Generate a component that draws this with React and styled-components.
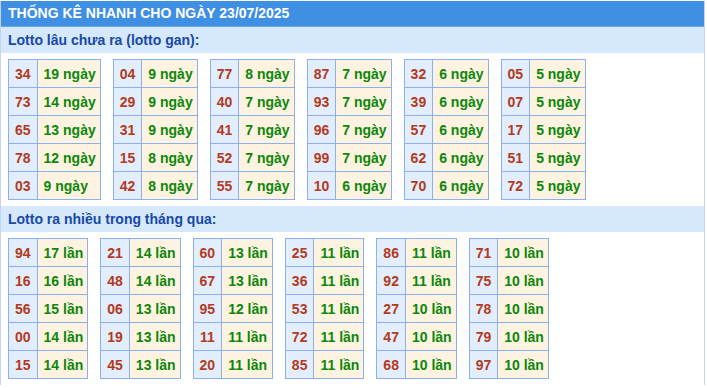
import React from "react";
import styled, { createGlobalStyle } from "styled-components";

const GlobalStyle = createGlobalStyle`
  body {
    margin: 0;
    background: #fff;
    font-family: "Liberation Sans", Arial, sans-serif;
  }
`;

const Wrapper = styled.div`
  width: 703px;
  margin-top: 1px;
  border-left: 1px solid #c3d3eb;
  border-right: 1px solid #c3d3eb;
  background: #fff;
`;

const Header = styled.div`
  height: 25px;
  background: #3f8fe2;
  color: #fff;
  font-size: 14px;
  font-weight: bold;
  line-height: 25px;
  padding-left: 7px;
  border-bottom: 1px solid #6aa6e8;
`;

const SectionTitle = styled.div`
  height: 26px;
  line-height: 26px;
  background: #d5e8fc;
  color: #1849a6;
  font-size: 14px;
  font-weight: bold;
  padding-left: 7px;
`;

const TableRow = styled.div`
  display: flex;
  align-items: flex-start;
  gap: 12px;
  padding: 6px 0 6px 7px;
`;

const Table = styled.table`
  border-collapse: collapse;
  border: 1px solid #8cb0ef;
`;

const Cell = styled.td`
  height: 27px;
  padding: ${(p) => (p.$num ? "0 6px" : "0 4px 0 6px")};
  border: 1px solid #8cb0ef;
  text-align: ${(p) => (p.$num ? "center" : "left")};
  font-size: 14px;
  font-weight: bold;
  white-space: nowrap;
  background: ${(p) => (p.$num ? "#e2eefd" : "#fef3e0")};
  color: ${(p) => (p.$num ? "#b33a1c" : "#0b870b")};
  width: ${(p) => (p.$num ? "15px" : "auto")};
`;

const gan = [
  [["34", 19], ["73", 14], ["65", 13], ["78", 12], ["03", 9]],
  [["04", 9], ["29", 9], ["31", 9], ["15", 8], ["42", 8]],
  [["77", 8], ["40", 7], ["41", 7], ["52", 7], ["55", 7]],
  [["87", 7], ["93", 7], ["96", 7], ["99", 7], ["10", 6]],
  [["32", 6], ["39", 6], ["57", 6], ["62", 6], ["70", 6]],
  [["05", 5], ["07", 5], ["17", 5], ["51", 5], ["72", 5]],
];

const nhieu = [
  [["94", 17], ["16", 16], ["56", 15], ["00", 14], ["15", 14]],
  [["21", 14], ["48", 14], ["06", 13], ["19", 13], ["45", 13]],
  [["60", 13], ["67", 13], ["95", 12], ["11", 11], ["20", 11]],
  [["25", 11], ["36", 11], ["53", 11], ["72", 11], ["85", 11]],
  [["86", 11], ["92", 11], ["27", 10], ["47", 10], ["68", 10]],
  [["71", 10], ["75", 10], ["78", 10], ["79", 10], ["97", 10]],
];

const StatTables = ({ groups, unit }) => (
  <TableRow>
    {groups.map((rows, i) => (
      <Table key={i}>
        <tbody>
          {rows.map(([num, count]) => (
            <tr key={num}>
              <Cell $num>{num}</Cell>
              <Cell>
                {count} {unit}
              </Cell>
            </tr>
          ))}
        </tbody>
      </Table>
    ))}
  </TableRow>
);

const App = () => {
  return (
    <>
      <GlobalStyle />
      <Wrapper>
        <Header>THỐNG KÊ NHANH CHO NGÀY 23/07/2025</Header>
        <SectionTitle>Lotto lâu chưa ra (lotto gan):</SectionTitle>
        <StatTables groups={gan} unit="ngày" />
        <SectionTitle>Lotto ra nhiều trong tháng qua:</SectionTitle>
        <StatTables groups={nhieu} unit="lần" />
      </Wrapper>
    </>
  );
};

export default App;
